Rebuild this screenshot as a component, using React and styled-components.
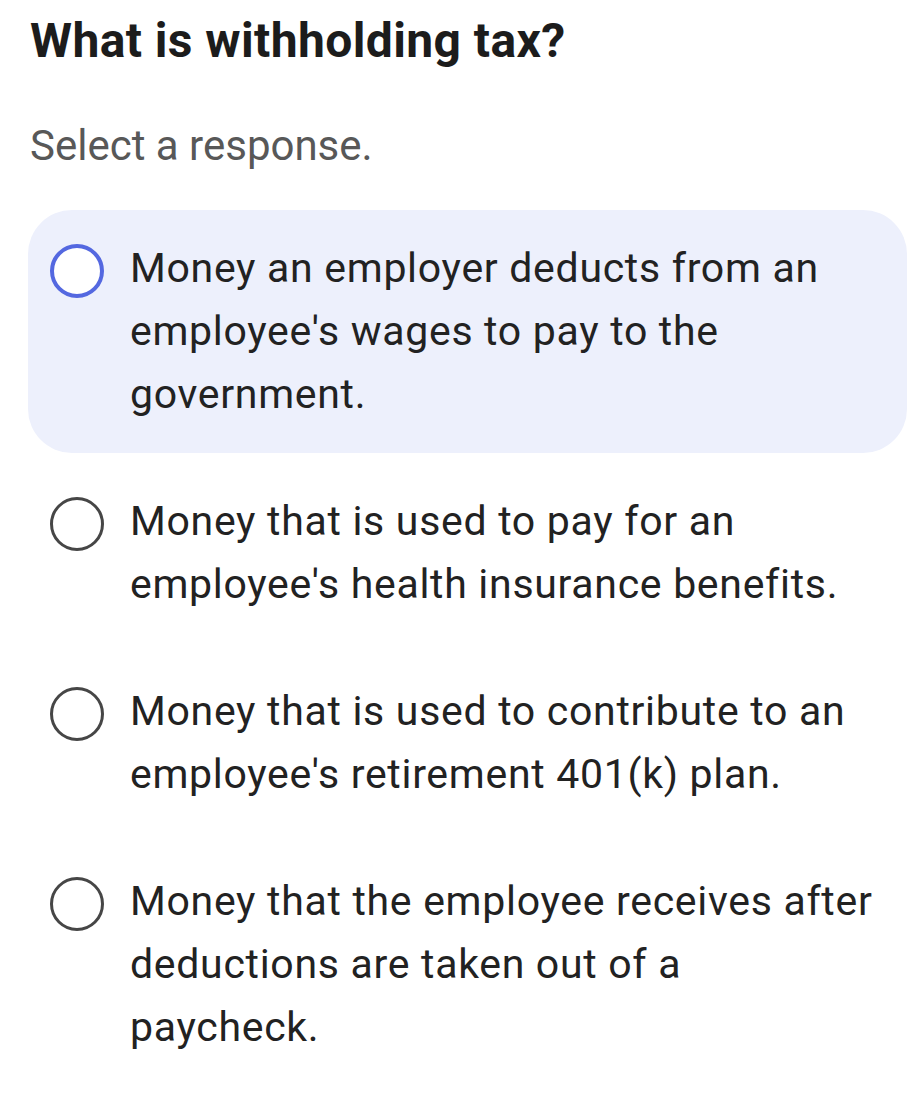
import React, { useState } from "react";
import styled, { createGlobalStyle } from "styled-components";

const GlobalStyle = createGlobalStyle`
  body {
    margin: 0;
    background: #ffffff;
    font-family: Roboto, "Noto Sans", Arial, sans-serif;
  }
`;

const Page = styled.div`
  padding: 11px 6px 20px 28px;
`;

const Question = styled.h1`
  margin: 0 0 49px 2px;
  font-size: 48px;
  line-height: 60px;
  font-weight: 700;
  letter-spacing: 0.4px;
  color: #1c1c1c;
`;

const Hint = styled.p`
  margin: 0 0 38px 2px;
  font-size: 42px;
  line-height: 52px;
  font-weight: 400;
  color: #585858;
`;

const OptionList = styled.div`
  display: flex;
  flex-direction: column;
  gap: 10px;
`;

const Option = styled.div`
  display: flex;
  align-items: flex-start;
  gap: 26px;
  padding: 27px 30px 27px 22px;
  border-radius: 44px;
  background: ${(p) => (p.$selected ? "#edf0fc" : "transparent")};
  cursor: pointer;
`;

const Radio = styled.span`
  flex: none;
  box-sizing: border-box;
  width: 54px;
  height: 54px;
  margin-top: 7px;
  border-radius: 50%;
  background: #ffffff;
  border: ${(p) => (p.$selected ? "4.5px solid #5468e0" : "3px solid #464646")};
`;

const OptionText = styled.span`
  font-size: 41px;
  line-height: 63px;
  letter-spacing: 0.7px;
  color: #222222;
`;

const answers = [
  "Money an employer deducts from an employee's wages to pay to the government.",
  "Money that is used to pay for an employee's health insurance benefits.",
  "Money that is used to contribute to an employee's retirement 401(k) plan.",
  "Money that the employee receives after deductions are taken out of a paycheck.",
];

export default function App() {
  const [selected, setSelected] = useState(0);

  return (
    <Page>
      <GlobalStyle />
      <Question>What is withholding tax?</Question>
      <Hint>Select a response.</Hint>
      <OptionList>
        {answers.map((text, i) => (
          <Option
            key={i}
            $selected={selected === i}
            onClick={() => setSelected(i)}
          >
            <Radio $selected={selected === i} />
            <OptionText>{text}</OptionText>
          </Option>
        ))}
      </OptionList>
    </Page>
  );
}
